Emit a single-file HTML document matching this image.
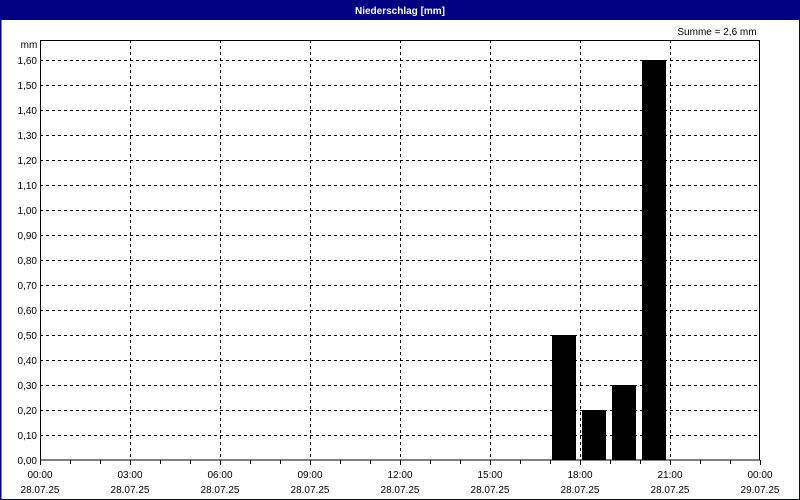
<!DOCTYPE html>
<html><head><meta charset="utf-8"><style>
html,body{margin:0;padding:0;background:#fff}
svg{display:block;font-family:"Liberation Sans",sans-serif;font-size:10px}
</style></head><body>
<svg id="s" width="800" height="500" xmlns="http://www.w3.org/2000/svg">
<rect x="0" y="0" width="800" height="500" fill="#fff"/>
<rect x="0" y="0" width="800" height="20" fill="#000080"/>
<rect x="0.5" y="0.5" width="799" height="499" fill="none" stroke="#000080" stroke-width="1"/>
<rect x="0" y="0" width="1.5" height="500" fill="#000080"/>
<text x="400" y="14" fill="#fff" font-weight="bold" font-size="10" text-anchor="middle">Niederschlag [mm]</text>
<text x="717" y="35" text-anchor="middle" fill="#000">Summe = 2,6 mm</text>
<text x="29" y="48" text-anchor="middle" fill="#000">mm</text>
<g id="g"></g>
<rect x="552" y="335" width="24" height="125" fill="#000"/>
<rect x="582" y="410" width="24" height="50" fill="#000"/>
<rect x="612" y="385" width="24" height="75" fill="#000"/>
<rect x="642" y="60" width="24" height="400" fill="#000"/>
<rect x="40.5" y="40.5" width="719" height="419.5" fill="none" stroke="#000" stroke-width="1"/>
</svg>
<script>
var g=document.getElementById('g'),h='';
for(var i=1;i<=16;i++){var y=460-i*25+0.5;h+='<line x1="40" x2="760" y1="'+y+'" y2="'+y+'" stroke="#000" stroke-dasharray="3,3"/>';}
for(var i=0;i<=16;i++){var y=460-i*25;var v=(i/10).toFixed(2).replace('.',',');h+='<text x="37" y="'+(y+4)+'" text-anchor="end">'+v+'</text>';}
for(var i=1;i<8;i++){var x=40+i*90+0.5;h+='<line x1="'+x+'" x2="'+x+'" y1="40" y2="460" stroke="#000" stroke-dasharray="3,3"/>';}
for(var i=0;i<=24;i++){var x=40+i*30+0.5;h+='<line x1="'+x+'" x2="'+x+'" y1="460" y2="'+(i%3==0?465:464)+'" stroke="#000"/>';}
var t=['00:00','03:00','06:00','09:00','12:00','15:00','18:00','21:00','00:00'];
for(var i=0;i<=8;i++){var x=40+i*90;h+='<text x="'+x+'" y="478" text-anchor="middle">'+t[i]+'</text><text x="'+x+'" y="493" text-anchor="middle">'+(i==8?'29.07.25':'28.07.25')+'</text>';}
g.innerHTML=h;
</script>
</body></html>
